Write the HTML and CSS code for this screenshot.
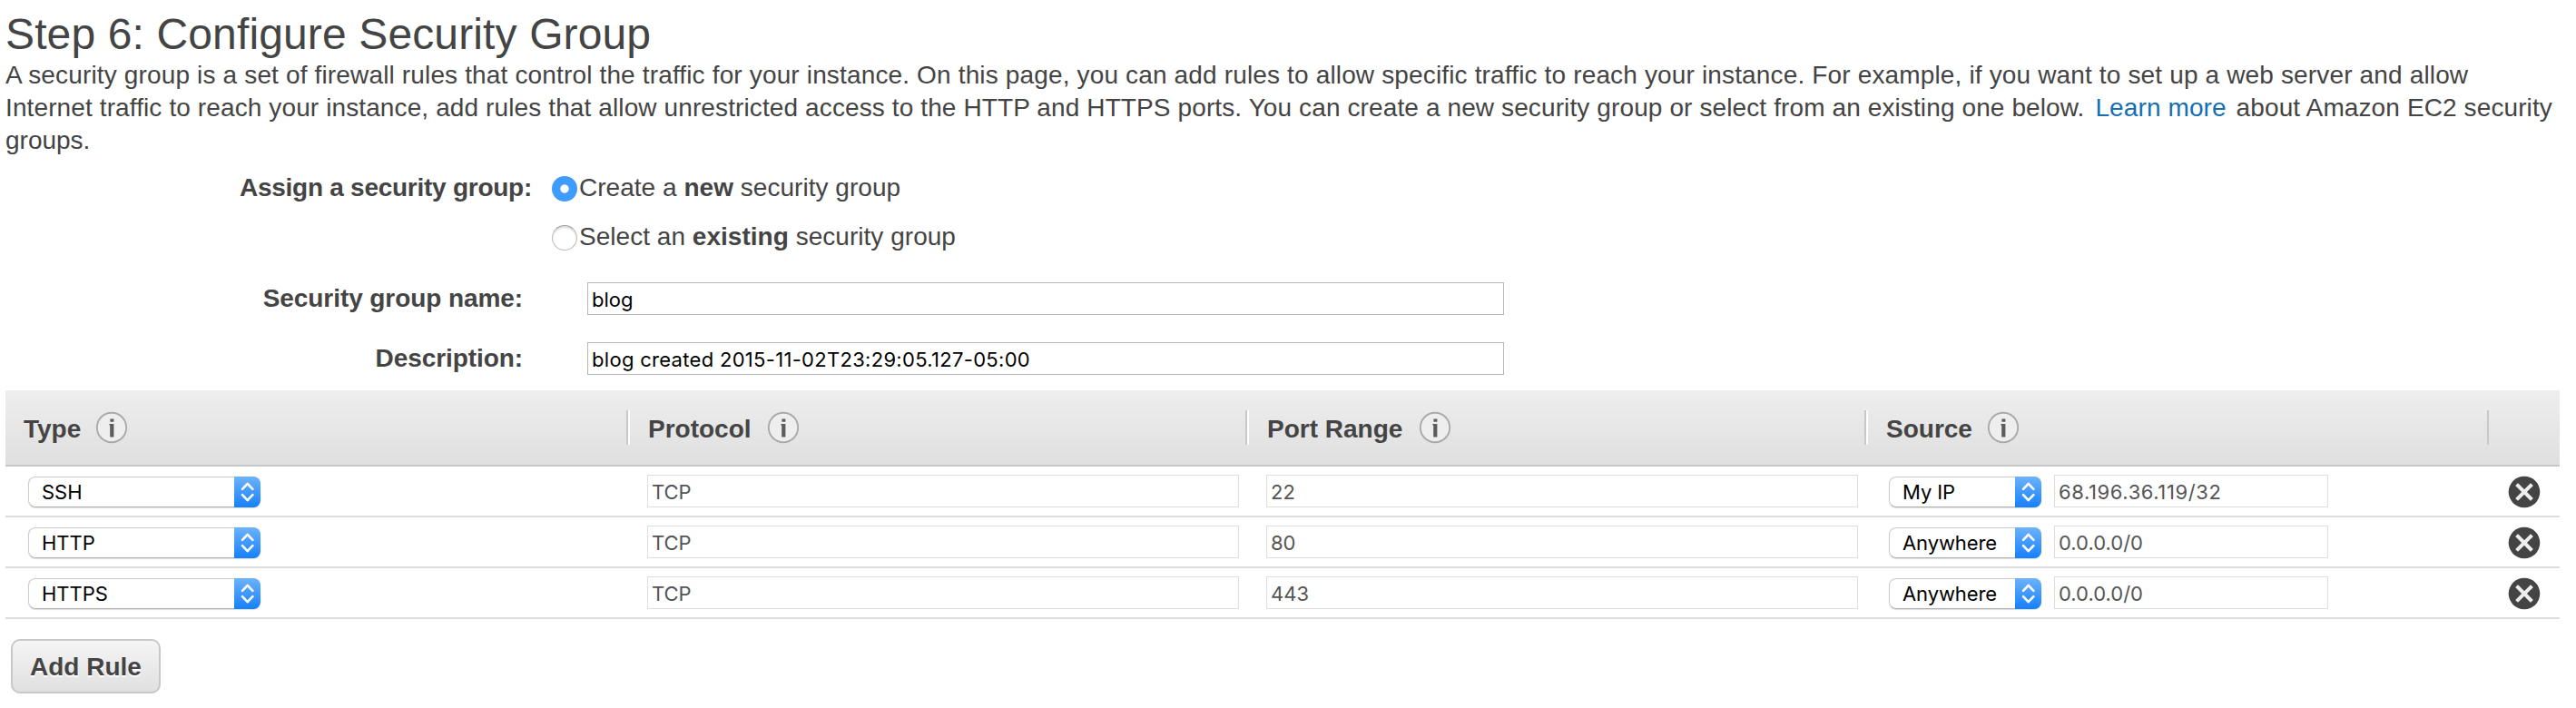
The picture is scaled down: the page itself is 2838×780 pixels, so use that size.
FILE: index.html
```
<!DOCTYPE html>
<html lang="en">
<head>
<meta charset="utf-8">
<title>Step 6: Configure Security Group</title>
<link rel="stylesheet" href="styles.css">
</head>
<body>
<svg class="defs" width="0" height="0" aria-hidden="true">
  <symbol id="info" viewBox="0 0 36 36"><circle cx="18" cy="18" r="16.2" fill="#eee" stroke="#aaa" stroke-width="1.9"/><path d="M16.4 8.5h4v3.2h-4zM15.4 14h5v14.5h-4.2V15.6h-.8z" fill="#5c5c5c"/></symbol>
  <symbol id="arrows" viewBox="0 0 29 34"><path d="M9 13.8l5.7-6 5.7 6M9 20.2l5.7 6 5.7-6" fill="none" stroke="#fff" stroke-width="2.6" stroke-linecap="round" stroke-linejoin="round"/></symbol>
  <symbol id="remove" viewBox="0 0 36 36"><circle cx="18" cy="18" r="17.3" fill="#444"/><path d="M11 11l14 14M25 11l-14 14" stroke="#eee" stroke-width="4" stroke-linecap="square" fill="none"/></symbol>
</svg>
<main class="page">
  <h1 class="title">Step 6: Configure Security Group</h1>
  <p class="intro"><span class="line-a">A security group is a set of firewall rules that control the traffic for your instance. On this page, you can add rules to allow specific traffic to reach your instance. For example, if you want to set up a web server and allow</span><br><span class="line-b">Internet traffic to reach your instance, add rules that allow unrestricted access to the HTTP and HTTPS ports. You can create a new security group or select from an existing one below. <a class="link">Learn more</a> about Amazon EC2 security</span><br>groups.</p>

  <section class="form">
    <div class="choice"><span class="label assign">Assign a security group:</span><i class="radio on"></i><span class="opt">Create a <b>new</b> security group</span></div>
    <div class="choice"><span class="label"></span><i class="radio"></i><span class="opt">Select an <b>existing</b> security group</span></div>
    <div class="field first"><span class="label">Security group name:</span><div class="input"><span>blog</span></div></div>
    <div class="field"><span class="label">Description:</span><div class="input"><span class="stamp">blog created 2015-11-02T23:29:05.127-05:00</span></div></div>
  </section>

  <section class="table">
    <div class="head">
      <div class="th type"><span>Type</span><svg class="info"><use href="#info"/></svg></div>
      <div class="th protocol"><span>Protocol</span><svg class="info"><use href="#info"/></svg></div>
      <div class="th"><span>Port Range</span><svg class="info"><use href="#info"/></svg></div>
      <div class="th origin"><span>Source</span><svg class="info"><use href="#info"/></svg></div>
      <div class="th last"></div>
    </div>
    <div class="row">
      <div class="td type"><div class="select"><span>SSH</span><svg class="arrows"><use href="#arrows"/></svg></div></div>
      <div class="td"><div class="box"><span>TCP</span></div></div>
      <div class="td"><div class="box"><span>22</span></div></div>
      <div class="td source"><div class="select"><span>My IP</span><svg class="arrows"><use href="#arrows"/></svg></div><div class="box"><span class="address">68.196.36.119/32</span></div></div>
      <div class="td del"><svg class="remove"><use href="#remove"/></svg></div>
    </div>
    <div class="row">
      <div class="td type"><div class="select"><span>HTTP</span><svg class="arrows"><use href="#arrows"/></svg></div></div>
      <div class="td"><div class="box"><span>TCP</span></div></div>
      <div class="td"><div class="box"><span>80</span></div></div>
      <div class="td source"><div class="select"><span>Anywhere</span><svg class="arrows"><use href="#arrows"/></svg></div><div class="box"><span>0.0.0.0/0</span></div></div>
      <div class="td del"><svg class="remove"><use href="#remove"/></svg></div>
    </div>
    <div class="row">
      <div class="td type"><div class="select"><span>HTTPS</span><svg class="arrows"><use href="#arrows"/></svg></div></div>
      <div class="td"><div class="box"><span>TCP</span></div></div>
      <div class="td"><div class="box"><span>443</span></div></div>
      <div class="td source"><div class="select"><span>Anywhere</span><svg class="arrows"><use href="#arrows"/></svg></div><div class="box"><span>0.0.0.0/0</span></div></div>
      <div class="td del"><svg class="remove"><use href="#remove"/></svg></div>
    </div>
  </section>
  <div class="button"><span>Add Rule</span></div>
</main>
</body>
</html>
```
FILE: styles.css
```
body {
  margin: 0;
  background: #fff;
  color: #444;
  font-family: "Liberation Sans", Arial, sans-serif;
  font-size: 28px;
  line-height: 36px;
  white-space: nowrap;
}
.defs { position: absolute; }
.page { padding: 6px 18px 0 6px; display: flex; flex-direction: column; align-items: stretch; }
.title { margin: 0 0 -5px; font-size: 48px; line-height: 64px; font-weight: normal; letter-spacing: 0.13px; }
.intro { margin: 0; }
.line-a { letter-spacing: 0.151px; }
.line-b { letter-spacing: 0.113px; }
.link { color: #146eb4; margin-left: 4px; margin-right: 3px; }

.form { display: flex; flex-direction: column; padding-top: 15px; height: 242px; box-sizing: content-box; }
.choice { display: flex; flex: none; height: 54px; align-items: flex-start; line-height: 38px; }
.label { width: 580px; text-align: right; font-weight: bold; letter-spacing: -0.08px; }
.label.assign { letter-spacing: -0.26px; }
.opt { letter-spacing: 0.03px; }
.radio { box-sizing: border-box; width: 28px; height: 28px; margin: 6px 2px 0 22px; border-radius: 50%; background: #fff; border: 1.5px solid #bbb; border-top-color: #999; box-shadow: inset 0 2px 2px #ddd; }
.radio.on { border: 0; background: radial-gradient(circle at 50% 50%, #fff 4.2px, #3f9bfc 5.2px); box-shadow: none; }
.field { display: flex; flex: none; height: 36px; margin-bottom: 30px; }
.field.first { margin-top: 15px; }
.field .label { width: 570px; }
.input { box-sizing: border-box; width: 1010px; height: 36px; margin-left: 71px; padding-left: 4px; border: 1px solid #b8b8b8; color: #000; font: 22px/36px Inter, sans-serif; }
.stamp { letter-spacing: 0.3px; }

.table { width: 2814px; }
.head, .row { display: grid; grid-template-columns: 684px 682px 682px 686px 80px; box-sizing: border-box; }
.head { height: 84px; border-bottom: 2px solid #c8c8c8; background: linear-gradient(#eee, #dfdfdf); align-items: start; }
.th { display: flex; height: 38px; margin-top: 22px; padding-left: 20px; font-weight: bold; }
.th span { line-height: 41px; }
.th + .th { border-left: 2px solid #c8c8c8; box-shadow: inset 2px 0 #fff; padding-left: 22px; }
.th.last { box-shadow: none; }
.info { width: 36px; height: 36px; margin: 1px 0 0 18px; }
.th.type .info, .th.origin .info { margin-left: 16px; }
.th.protocol .info { margin-left: 17px; }
.row { height: 56px; border-bottom: 2px solid #ddd; }
.td { display: flex; padding: 9px 7px 0 23px; }
.td.type { padding-left: 25px; }
.td.source { padding-left: 27px; }
.td.source .select { width: 168px; letter-spacing: -0.1px; }
.td.source .box { width: 302px; flex: none; margin-left: 14px; }
.address { letter-spacing: 0.6px; }
.select { display: flex; justify-content: space-between; box-sizing: border-box; width: 256px; height: 34px; margin-top: 2px; border: 1px solid #ccc; border-bottom-color: #b0b0b0; border-radius: 8px; padding-left: 14px; color: #000; font: 22px/33px Inter, sans-serif; box-shadow: 0 1px 1px #ddd; }
.arrows { width: 29px; height: 34px; margin: -1px -1px 0 0; border-radius: 0 8px 8px 0; background: linear-gradient(#6db3f9, #1580ff); }
.box { box-sizing: border-box; flex: 1; height: 36px; border: 1px solid #ddd; padding-left: 4px; color: #555; font: 22px/37px Inter, sans-serif; }
.td.del { padding: 10px 0 0 23px; }
.remove { width: 36px; height: 36px; }

.button { box-sizing: border-box; width: 165px; height: 60px; margin: 22px 0 0 6px; border: 2px solid #c8c8c8; border-radius: 10px; background: linear-gradient(#f5f5f5, #e0e0e0); text-align: center; font-weight: bold; line-height: 58px; text-shadow: 0 2px #fff; }
```
